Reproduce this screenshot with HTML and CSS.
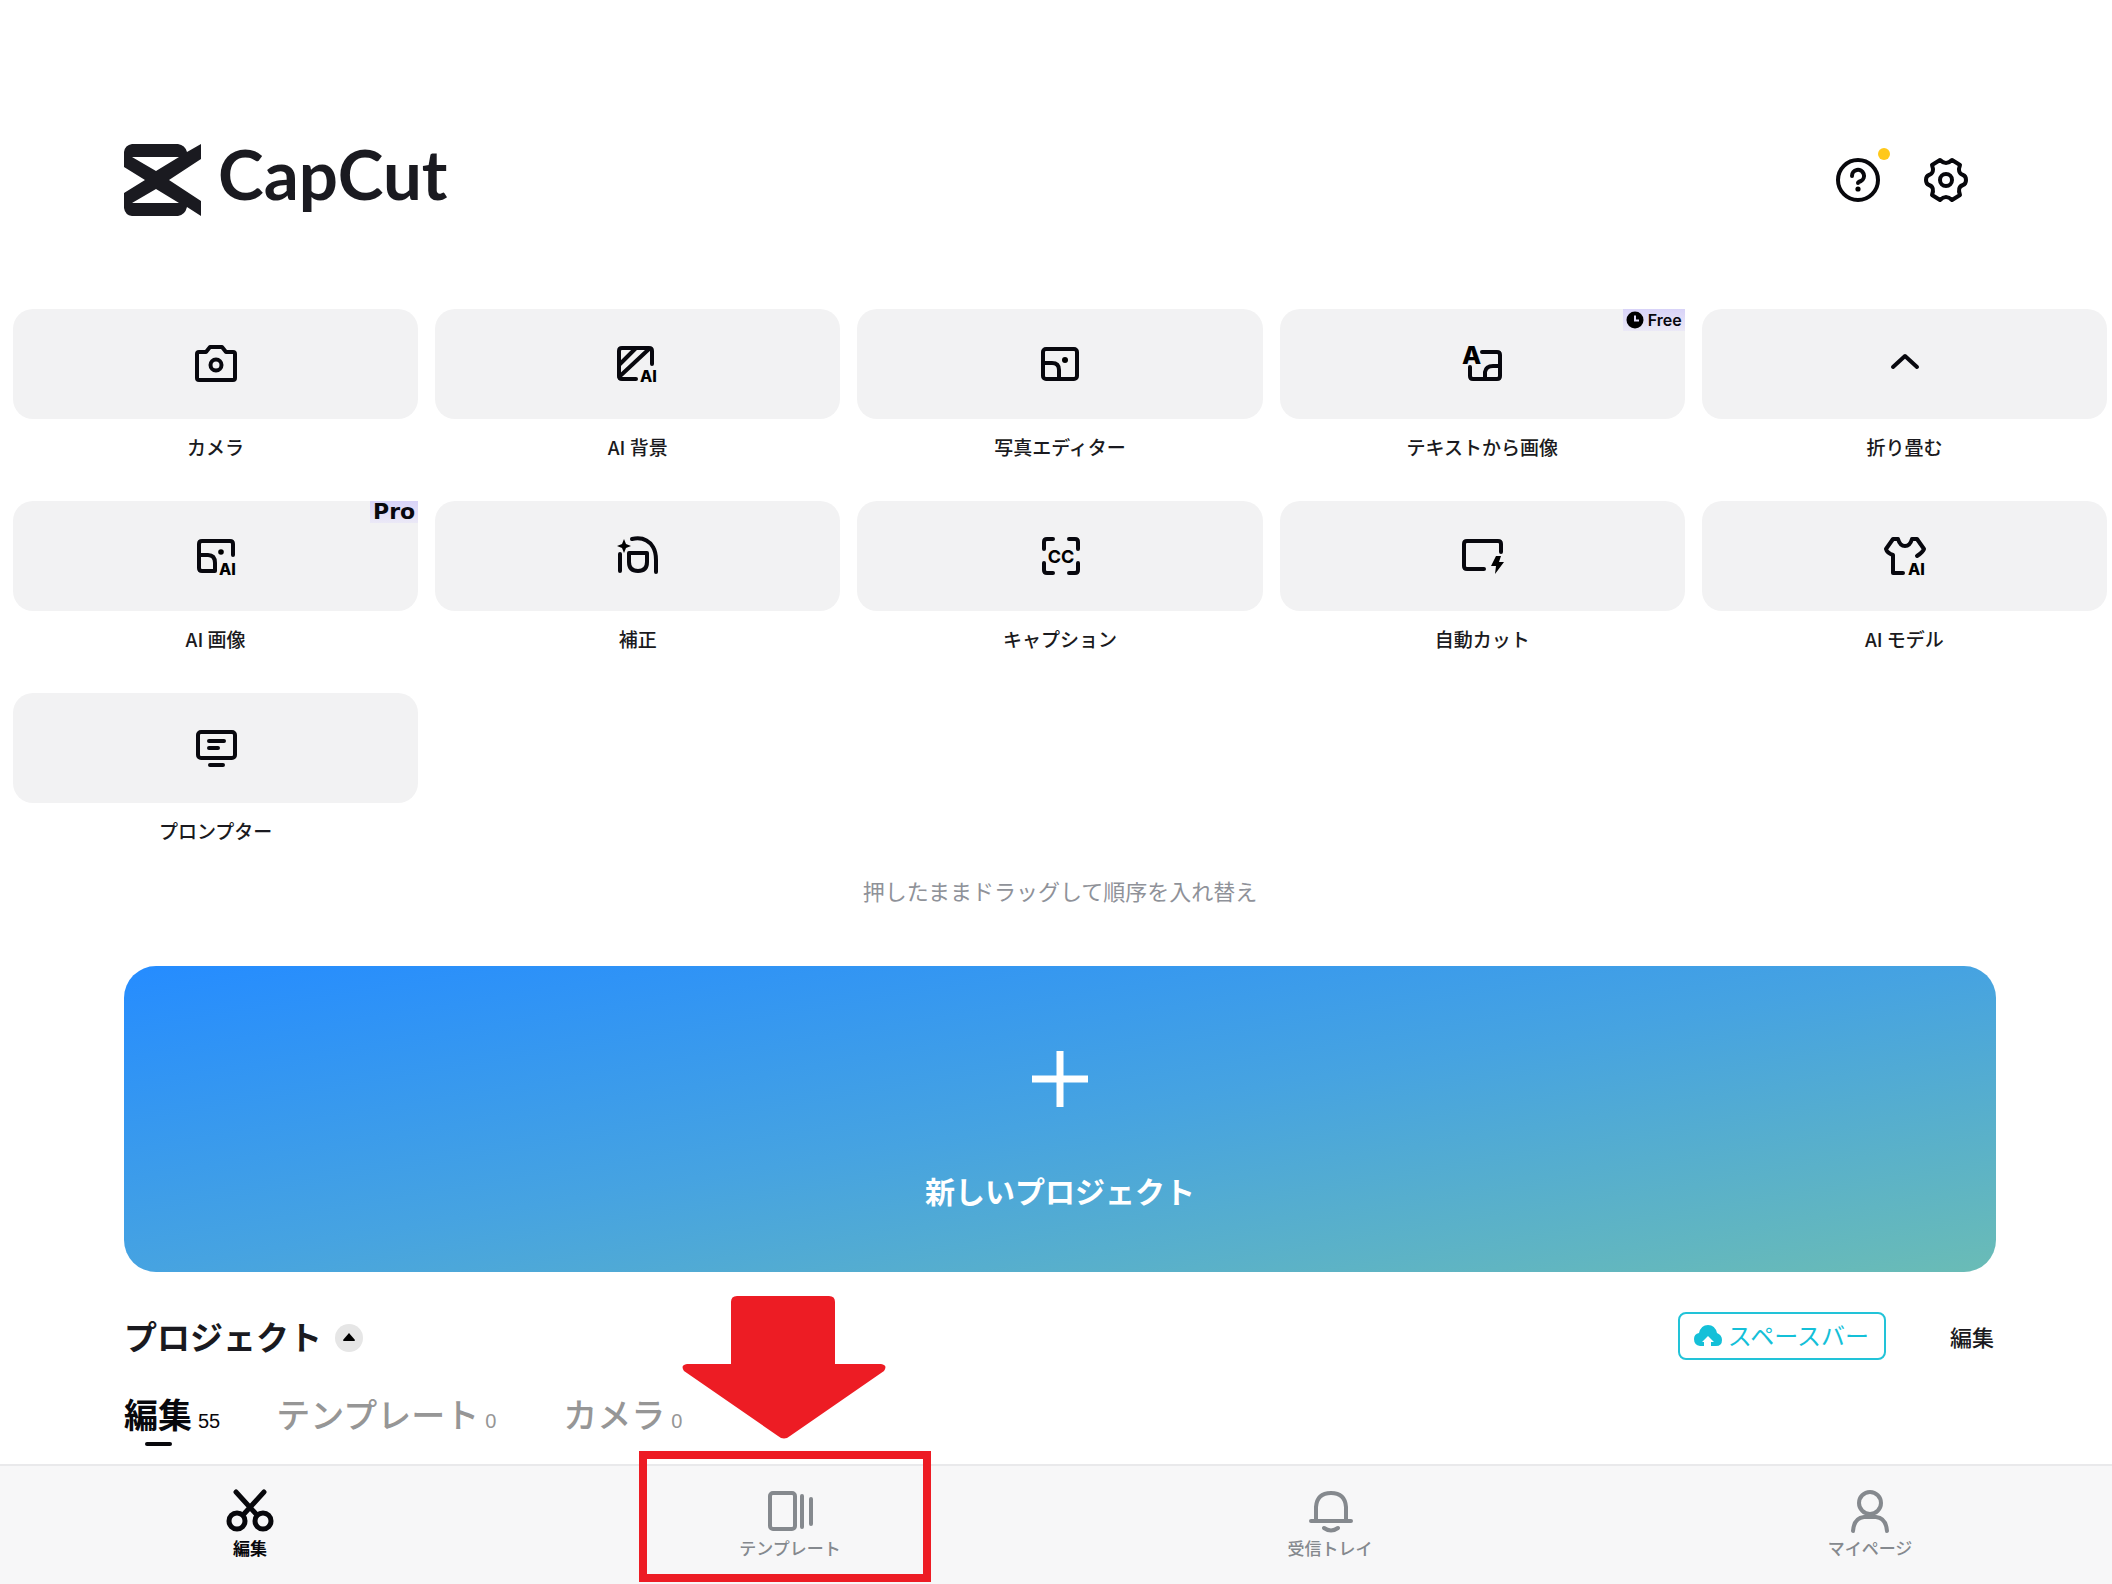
FILE: index.html
```html
<!DOCTYPE html>
<html lang="ja">
<head>
<meta charset="utf-8">
<meta name="viewport" content="width=device-width, initial-scale=1">
<title>CapCut</title>
<link rel="stylesheet" href="styles.css">
</head>
<body>
<div class="app">
  <header class="header">
    <a class="brand" href="#">
      <svg class="brand-mark" viewBox="0 0 78 72" aria-hidden="true">
        <path fill="#1a1a20" fill-rule="evenodd" d="M8 0H54Q61 1 63 8L77 0V15L45 36L77 57V72L63 63Q61 71 54 72H8Q1 71 0 64V49L21 36L0 23V8Q1 1 8 0ZM8 13H55L32 27ZM8 59H55L32 45Z"/>
      </svg>
      <span class="brand-name">CapCut</span>
    </a>
    <div class="header-actions">
      <button class="icon-button" type="button" aria-label="ヘルプ">
        <svg viewBox="0 0 44 44"><circle class="stroke" cx="22" cy="22" r="20"/><path class="stroke" d="M16 18a6 6 0 1 1 9 5q-3 1-3 2"/><circle cx="22" cy="31" r="2.600"/></svg>
        <span class="dot"></span>
      </button>
      <button class="icon-button" type="button" aria-label="設定">
        <svg viewBox="0 0 44 44"><path class="stroke" d="M16 2Q22 8 28 2L36 7Q33 15 39 17Q42 18 42 22Q42 26 39 27Q33 29 36 37L28 42Q22 36 16 42L8 37Q11 29 5 27Q2 26 2 22Q2 18 5 17Q11 15 8 7Z"/><circle class="stroke" cx="22" cy="22" r="6"/></svg>
      </button>
    </div>
  </header>

  <main>
    <section class="tools">
      <button class="tool" type="button"><span class="tile"><svg viewBox="0 0 44 44"><path class="stroke" d="M5 10H12L16 5H28L32 10H39Q41 10 41 12V36Q41 38 39 38H5Q3 38 3 36V12Q3 10 5 10Z"/><circle class="stroke" cx="22" cy="23" r="5.500"/></svg></span><span class="tool-label">カメラ</span></button>
      <button class="tool" type="button"><span class="tile"><svg viewBox="0 0 44 44"><path class="stroke" d="M20 37H6Q3 37 3 34V9Q3 6 6 6H33Q36 6 36 9V22M3 23L20 6M3 35L33 7"/><text class="ai" x="24" y="40">AI</text></svg></span><span class="tool-label">AI 背景</span></button>
      <button class="tool" type="button"><span class="tile"><svg viewBox="0 0 44 44"><rect class="stroke" x="5" y="7" width="34" height="30" rx="3"/><path class="stroke" d="M5 21H14Q21 21 21 28V37"/><circle cx="27" cy="18" r="3"/></svg></span><span class="tool-label">写真エディター</span></button>
      <button class="tool" type="button"><span class="tile"><svg viewBox="0 0 44 44"><text class="letter" x="2" y="22">A</text><path class="stroke" d="M22 10H37Q40 10 40 13V34Q40 37 37 37H13Q10 37 10 34V25M25 37V30Q26 24 33 24H40"/></svg><span class="badge badge-free"><svg viewBox="0 0 18 18" aria-hidden="true"><circle cx="9" cy="9" r="8.500"/><path class="clock-hand" d="M9 4.500V9.500H13"/></svg>Free</span></span><span class="tool-label">テキストから画像</span></button>
      <button class="tool" type="button"><span class="tile"><svg viewBox="0 0 44 44"><path class="stroke" d="M11 25L23 14L35 25"/></svg></span><span class="tool-label">折り畳む</span></button>
      <button class="tool" type="button"><span class="tile"><svg viewBox="0 0 44 44"><path class="stroke" d="M39 21V10Q39 7 36 7H8Q5 7 5 10V34Q5 37 8 37H21V29Q21 21 14 21H5"/><circle cx="27" cy="18" r="2.800"/><text class="ai" x="25" y="41">AI</text></svg><span class="badge badge-pro">Pro</span></span><span class="tool-label">AI 画像</span></button>
      <button class="tool" type="button"><span class="tile"><svg viewBox="0 0 44 44"><path class="stroke" d="M4 20V37M16 5Q30 2 37 13Q40 18 40 26V38M13 19H31V28Q31 37 22 37Q13 37 13 28Z"/><path d="M8 5L10 10L15 12L10 14L8 19L6 14L1 12L6 10Z"/></svg></span><span class="tool-label">補正</span></button>
      <button class="tool" type="button"><span class="tile"><svg viewBox="0 0 44 44"><path class="stroke" d="M15 5H9Q6 5 6 8V15M31 5H37Q40 5 40 8V15M6 29V36Q6 39 9 39H15M40 29V36Q40 39 37 39H31"/><text class="cc" x="23" y="29">CC</text></svg></span><span class="tool-label">キャプション</span></button>
      <button class="tool" type="button"><span class="tile"><svg viewBox="0 0 44 44"><path class="stroke" d="M24 35H7Q4 35 4 32V10Q4 7 7 7H38Q41 7 41 10V18"/><path d="M36 22H41L39 28H44L35 40L36 32H31Z"/></svg></span><span class="tool-label">自動カット</span></button>
      <button class="tool" type="button"><span class="tile"><svg viewBox="0 0 44 44"><path class="stroke" d="M21 39H11V21Q5 19 4 15L11 5H16Q18 12 23 12Q28 12 30 5H35L42 15Q41 18 35 22"/><text class="ai" x="26" y="41">AI</text></svg></span><span class="tool-label">AI モデル</span></button>
      <button class="tool" type="button"><span class="tile"><svg viewBox="0 0 44 44"><rect class="stroke" x="4" y="6" width="37" height="26" rx="3"/><path class="stroke" d="M15 15H30M15 22H24M16 39H29"/></svg></span><span class="tool-label">プロンプター</span></button>
    </section>
    <p class="hint">押したままドラッグして順序を入れ替え</p>

    <div class="content">
      <button class="new-project" type="button">
        <svg viewBox="0 0 56 56" aria-hidden="true"><path d="M28 0V56M0 28H56"/></svg>
        <span>新しいプロジェクト</span>
      </button>

      <section class="projects">
        <div class="projects-head">
          <h1>プロジェクト</h1>
          <button class="sort" type="button" aria-label="並べ替え"><svg viewBox="0 0 28 28"><path d="M14 9L20 16Q20 17 19 17H9Q8 17 8 16Z"/></svg></button>
          <button class="space" type="button"><svg viewBox="0 0 28 22" aria-hidden="true"><path fill-rule="evenodd" d="M10 21H6Q0 20 0 14Q0 9 5 8Q7 0 14 0Q21 0 23 8Q28 10 28 15Q28 21 22 21H17V17H20L14 11L8 17H10Z"/></svg><span>スペースバー</span></button>
          <button class="edit" type="button">編集</button>
        </div>
        <nav class="tabs">
          <a class="tab active" href="#">編集<span class="count">55</span></a>
          <a class="tab" href="#">テンプレート<span class="count">0</span></a>
          <a class="tab" href="#">カメラ<span class="count">0</span></a>
        </nav>
      </section>
    </div>
  </main>

  <nav class="bottom-nav">
    <a class="nav-item current" href="#"><svg viewBox="0 0 48 42"><path class="stroke" d="M10 2L31 25M38 2L17 25"/><circle class="stroke" cx="11" cy="31" r="8"/><circle class="stroke" cx="37" cy="31" r="8"/></svg><span>編集</span></a>
    <a class="nav-item" href="#"><svg viewBox="0 0 48 42"><rect class="stroke" x="4" y="3" width="25" height="36" rx="3"/><path class="stroke" d="M36 6V37M45 9V34"/></svg><span>テンプレート</span>
      <span class="highlight"></span>
      <svg class="arrow" viewBox="0 0 204 144" aria-hidden="true"><path d="M55 0H147Q153 0 153 6V68H199Q206 69 202 75L108 140Q102 145 96 140L2 75Q-2 69 5 68H49V6Q49 0 55 0Z"/></svg>
    </a>
    <a class="nav-item" href="#"><svg viewBox="0 0 48 42"><path class="stroke" d="M5 31H45M10 30V17Q11 3 25 3Q39 3 40 17V30M18 38Q25 43 32 38"/></svg><span>受信トレイ</span></a>
    <a class="nav-item" href="#"><svg viewBox="0 0 48 42"><circle class="stroke" cx="24" cy="13" r="11"/><path class="stroke" d="M7 41Q8 28 18 27H30Q40 28 41 41"/></svg><span>マイページ</span></a>
  </nav>
</div>
</body>
</html>
```

FILE: styles.css
```css
* { box-sizing: border-box; }

body {
  margin: 0;
  background: #fff;
  color: #1a1a20;
  font-family: "Noto Sans CJK JP", "Noto Sans", sans-serif;
}

button {
  padding: 0;
  border: 0;
  background: none;
  color: inherit;
  font: inherit;
  cursor: pointer;
}

a {
  color: inherit;
  text-decoration: none;
}

svg {
  display: block;
  overflow: visible;
}

.stroke {
  fill: none;
  stroke: currentColor;
  stroke-width: 4;
  stroke-linecap: round;
  stroke-linejoin: round;
}

.app {
  display: flex;
  flex-direction: column;
  min-height: 100vh;
}

main { flex: 1; }

/* Header */
.header {
  display: flex;
  align-items: center;
  justify-content: space-between;
  padding: 144px 144px 0 124px;
}

.brand {
  display: flex;
  align-items: flex-start;
  gap: 16px;
  height: 72px;
}

.brand-mark {
  width: 78px;
  height: 72px;
}

.brand-name {
  font: 700 69px/60px Lato, sans-serif;
}

.header-actions {
  display: flex;
  gap: 44px;
}

.icon-button {
  position: relative;
  color: #08080c;
}

.icon-button svg {
  width: 44px;
  height: 44px;
}

.dot {
  position: absolute;
  top: -10px;
  right: -10px;
  width: 12px;
  height: 12px;
  border-radius: 50%;
  background: #ffc81a;
}

/* Tool grid */
.tools {
  display: grid;
  grid-template-columns: repeat(5, 1fr);
  gap: 40px 17px;
  padding: 93px 5px 0 13px;
}

.tool {
  display: flex;
  flex-direction: column;
  gap: 14px;
}

.tile {
  position: relative;
  display: flex;
  align-items: center;
  justify-content: center;
  width: 100%;
  height: 110px;
  border-radius: 20px;
  background: #f2f2f3;
  color: #08080e;
}

.tile > svg {
  width: 44px;
  height: 44px;
}

.tool-label {
  width: 100%;
  font-size: 19px;
  font-weight: 500;
  line-height: 28px;
  text-align: center;
}

.ai { font: 800 16px Inter, sans-serif; }
.letter { font: 800 25px Inter, sans-serif; }
.cc {
  font: 700 18px Inter, sans-serif;
  text-anchor: middle;
}

.badge {
  position: absolute;
  top: 0;
  right: 0;
  display: flex;
  align-items: center;
  justify-content: center;
  gap: 4px;
  height: 22px;
  padding: 0 3px;
  background: linear-gradient(#d8d3f8, #ebe9f6);
}

.badge svg {
  width: 18px;
  height: 18px;
}

.badge-free { font: 600 16px/22px Inter, sans-serif; }
.badge-pro { font: 700 22px/22px "DejaVu Sans", sans-serif; }

.clock-hand {
  fill: none;
  stroke: #e0dcf8;
  stroke-width: 2;
}

.hint {
  margin: 29px 0 60px;
  padding-left: 8px;
  color: #8f9299;
  font-size: 22px;
  line-height: 32px;
  text-align: center;
}

/* Projects */
.content { padding: 0 116px 0 124px; }

.new-project {
  display: flex;
  flex-direction: column;
  align-items: center;
  gap: 61px;
  width: 100%;
  padding: 85px 0 60px;
  border-radius: 32px;
  background: linear-gradient(to bottom right, #258cff, #46a3e1 50%, #6abcb6);
  color: #fff;
  font-size: 30px;
  font-weight: 700;
  line-height: 44px;
}

.new-project svg {
  width: 56px;
  height: 56px;
  stroke: currentColor;
  stroke-width: 7;
}

.projects { padding-top: 40px; }

.projects-head {
  display: flex;
  align-items: center;
}

h1 {
  margin: 0;
  font-size: 33px;
  font-weight: 700;
  line-height: 48px;
}

.sort {
  margin: 4px 0 0 13px;
  border-radius: 50%;
  background: #e6e6e6;
}

.sort svg {
  width: 28px;
  height: 28px;
}

.space {
  display: flex;
  align-items: center;
  gap: 6px;
  height: 48px;
  margin-left: auto;
  padding: 0 15px 0 14px;
  border: 2px solid #22c3d8;
  border-radius: 8px;
  color: #14c0d8;
  font-size: 24px;
  line-height: 36px;
}

.space svg {
  width: 28px;
  height: 22px;
  fill: currentColor;
}

.space span { padding-bottom: 3px; }

.edit {
  margin: 0 2px 0 64px;
  font-size: 22px;
  font-weight: 500;
  line-height: 36px;
}

.tabs {
  display: flex;
  gap: 56px;
  padding: 34px 0 18px;
}

.tab {
  position: relative;
  display: flex;
  align-items: baseline;
  gap: 6px;
  height: 52px;
  color: #969696;
  font-size: 34px;
  font-weight: 500;
  line-height: 40px;
}

.tab.active {
  color: #08080c;
  font-weight: 700;
}

.tab.active::after {
  content: "";
  position: absolute;
  bottom: 0;
  left: 21px;
  width: 27px;
  height: 4px;
  border-radius: 2px;
  background: #08080c;
}

.count {
  min-width: 22px;
  font: 400 20px/24px "Liberation Sans", sans-serif;
}

/* Bottom navigation */
.bottom-nav {
  display: flex;
  justify-content: space-between;
  padding: 24px 192px 23px 200px;
  border-top: 2px solid #e9e9eb;
  background: #f7f7f8;
}

.nav-item {
  position: relative;
  display: flex;
  flex-direction: column;
  align-items: center;
  gap: 3px;
  width: 100px;
  color: #85898e;
  font-size: 17px;
  font-weight: 500;
  line-height: 26px;
  white-space: nowrap;
}

.nav-item.current {
  color: #08080c;
  font-weight: 700;
}

.nav-item.current .stroke { stroke-width: 5; }

.nav-item > svg {
  width: 48px;
  height: 42px;
}

.highlight {
  position: absolute;
  top: -39px;
  left: -101px;
  width: 292px;
  height: 131px;
  border: 8px solid #ed1c24;
}

.nav-item > .arrow {
  position: absolute;
  top: -194px;
  left: -58px;
  width: 204px;
  height: 144px;
  fill: #ed1c24;
}
```
